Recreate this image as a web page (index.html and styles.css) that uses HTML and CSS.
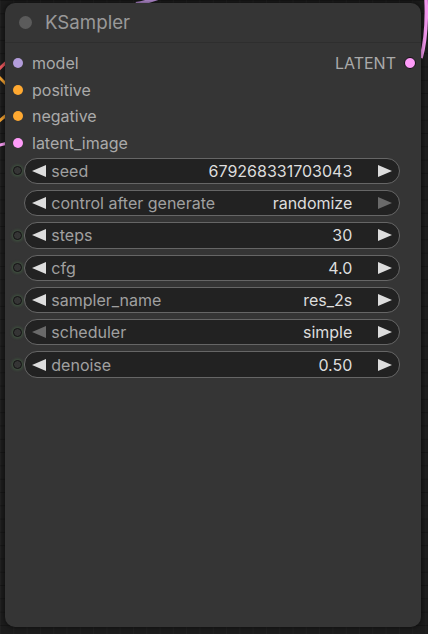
FILE: index.html
```html
<!DOCTYPE html>
<html>
<head>
<meta charset="utf-8">
<link rel="stylesheet" href="styles.css">
</head>
<body>
<svg class="wires" width="428" height="634" viewBox="0 0 428 634">
  <path d="M-4 72 C 0 68, 4 64, 8 61" stroke="#e8575d" stroke-width="3" fill="none"/>
  <path d="M-4 74 C 0 78, 4 82, 8 86" stroke="#f0a030" stroke-width="3" fill="none"/>
  <path d="M-4 124 C 0 120, 4 117, 8 114" stroke="#f0a030" stroke-width="3" fill="none"/>
  <path d="M-4 146 C 0 145, 4 144, 8 143" stroke="#f59af0" stroke-width="3" fill="none"/>
  <path d="M136 4 C 142 3, 150 1, 158 -2" stroke="#b48ad0" stroke-width="4" fill="none"/>
  <path d="M426 -2 C 427 20, 426 40, 421 58" stroke="#f59af0" stroke-width="3.5" fill="none"/>
</svg>
<div class="node">
  <div class="title">
    <span class="title-dot"></span>
    <span class="title-text">KSampler</span>
  </div>
  <div class="io">
    <div class="io-row">
      <span class="slot slot-model"></span><span class="io-label">model</span>
      <span class="out-label">LATENT</span><span class="slot slot-latent out"></span>
    </div>
    <div class="io-row">
      <span class="slot slot-cond"></span><span class="io-label">positive</span>
    </div>
    <div class="io-row">
      <span class="slot slot-cond"></span><span class="io-label">negative</span>
    </div>
    <div class="io-row">
      <span class="slot slot-latent"></span><span class="io-label">latent_image</span>
    </div>
  </div>
  <div class="widgets">
    <div class="w-row"><span class="w-slot"></span><div class="pill"><svg class="arr" viewBox="0 0 14 12"><path d="M0 6 L14 0 L14 12 Z"/></svg><span class="w-label">seed</span><span class="w-value">679268331703043</span><svg class="arr" viewBox="0 0 14 12"><path d="M14 6 L0 0 L0 12 Z"/></svg></div></div>
    <div class="w-row"><span class="w-slot none"></span><div class="pill"><svg class="arr" viewBox="0 0 14 12"><path d="M0 6 L14 0 L14 12 Z"/></svg><span class="w-label">control after generate</span><span class="w-value">randomize</span><svg class="arr dim" viewBox="0 0 14 12"><path d="M14 6 L0 0 L0 12 Z"/></svg></div></div>
    <div class="w-row"><span class="w-slot"></span><div class="pill"><svg class="arr" viewBox="0 0 14 12"><path d="M0 6 L14 0 L14 12 Z"/></svg><span class="w-label">steps</span><span class="w-value">30</span><svg class="arr" viewBox="0 0 14 12"><path d="M14 6 L0 0 L0 12 Z"/></svg></div></div>
    <div class="w-row"><span class="w-slot"></span><div class="pill"><svg class="arr" viewBox="0 0 14 12"><path d="M0 6 L14 0 L14 12 Z"/></svg><span class="w-label">cfg</span><span class="w-value">4.0</span><svg class="arr" viewBox="0 0 14 12"><path d="M14 6 L0 0 L0 12 Z"/></svg></div></div>
    <div class="w-row"><span class="w-slot"></span><div class="pill"><svg class="arr" viewBox="0 0 14 12"><path d="M0 6 L14 0 L14 12 Z"/></svg><span class="w-label">sampler_name</span><span class="w-value">res_2s</span><svg class="arr" viewBox="0 0 14 12"><path d="M14 6 L0 0 L0 12 Z"/></svg></div></div>
    <div class="w-row"><span class="w-slot"></span><div class="pill"><svg class="arr dim" viewBox="0 0 14 12"><path d="M0 6 L14 0 L14 12 Z"/></svg><span class="w-label">scheduler</span><span class="w-value">simple</span><svg class="arr" viewBox="0 0 14 12"><path d="M14 6 L0 0 L0 12 Z"/></svg></div></div>
    <div class="w-row"><span class="w-slot"></span><div class="pill"><svg class="arr" viewBox="0 0 14 12"><path d="M0 6 L14 0 L14 12 Z"/></svg><span class="w-label">denoise</span><span class="w-value">0.50</span><svg class="arr" viewBox="0 0 14 12"><path d="M14 6 L0 0 L0 12 Z"/></svg></div></div>
  </div>
</div>
</body>
</html>
```
FILE: styles.css
```css
html, body {
  margin: 0;
  padding: 0;
}
body {
  width: 428px;
  height: 634px;
  overflow: hidden;
  background-color: #1c1c1c;
  background-image:
    linear-gradient(to right, rgba(255,255,255,0.025) 1px, transparent 1px),
    linear-gradient(to bottom, rgba(0,0,0,0.25) 1px, transparent 1px);
  background-size: 13.3px 13.3px;
  font-family: Inter, "Liberation Sans", Arial, sans-serif;
  position: relative;
}
.wires {
  position: absolute;
  left: 0;
  top: 0;
  z-index: 0;
}
.node {
  position: relative;
  z-index: 1;
  margin: 3px 0 0 5px;
  width: 416px;
  height: 624px;
  background: #353535;
  border-radius: 10px;
  box-shadow: 0 0 4px 1px rgba(0,0,0,0.45);
  box-sizing: border-box;
}
.title {
  height: 40px;
  border-bottom: 1px solid #2e2e2e;
  display: flex;
  align-items: center;
  box-sizing: border-box;
  padding-left: 13.5px;
}
.title-dot {
  width: 13px;
  height: 13px;
  border-radius: 50%;
  background: #5b5b5b;
  margin-right: 13.5px;
}
.title-text {
  color: #999999;
  font-size: 18.7px;
  margin-top: -1px;
}
.io {
  padding-top: 6.5px;
}
.io-row {
  height: 26.8px;
  display: flex;
  align-items: center;
  padding-left: 8px;
  padding-right: 5px;
}
.slot {
  width: 10px;
  height: 10px;
  border-radius: 50%;
  flex: none;
}
.slot-model { background: #b39ddb; }
.slot-cond { background: #ffa931; }
.slot-latent { background: #ff9cf9; }
.slot.out {
  width: 10px;
  height: 10px;
  border: 1.5px solid #111;
  box-sizing: content-box;
  margin-left: 8px;
}
.io-label {
  color: #aaaaaa;
  font-size: 16px;
  margin-left: 9px;
  flex: 1;
}
.out-label {
  color: #aaaaaa;
  font-size: 16px;
}
.widgets {
  padding-top: 1px;
  display: flex;
  flex-direction: column;
  gap: 5.9px;
}
.w-row {
  display: flex;
  align-items: center;
  height: 26.4px;
}
.w-slot {
  width: 7px;
  height: 7px;
  border-radius: 50%;
  border: 1.3px solid #141414;
  background: transparent;
  box-shadow: 0 0 3px 1px rgba(90,170,90,0.3);
  margin-left: 8.3px;
  margin-right: 2px;
  flex: none;
}
.w-slot.none {
  border-color: transparent;
  box-shadow: none;
}
.pill {
  width: 376px;
  height: 26.4px;
  flex: none;
  box-sizing: border-box;
  border: 1px solid #666;
  border-radius: 13px;
  background: #222222;
  display: flex;
  align-items: center;
  padding-left: 7px;
  padding-right: 7px;
}
.arr {
  width: 14px;
  height: 12px;
  fill: #dddddd;
  flex: none;
}
.arr.dim { fill: #6a6a6a; }
.w-label {
  color: #a0a0a0;
  font-size: 16px;
  margin-left: 5px;
  flex: 1;
  white-space: nowrap;
}
.w-value {
  color: #dddddd;
  font-size: 16px;
  margin-right: 26px;
  white-space: nowrap;
}
```
